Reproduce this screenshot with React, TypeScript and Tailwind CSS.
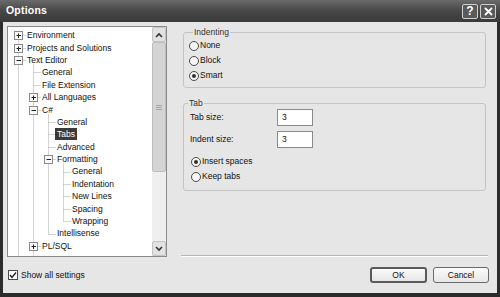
import React from 'react';

type Node = { label: string; level: number; exp?: '+' | '-'; selected?: boolean };

const nodes: Node[] = [
  { label: 'Environment', level: 0, exp: '+' },
  { label: 'Projects and Solutions', level: 0, exp: '+' },
  { label: 'Text Editor', level: 0, exp: '-' },
  { label: 'General', level: 1 },
  { label: 'File Extension', level: 1 },
  { label: 'All Languages', level: 1, exp: '+' },
  { label: 'C#', level: 1, exp: '-' },
  { label: 'General', level: 2 },
  { label: 'Tabs', level: 2, selected: true },
  { label: 'Advanced', level: 2 },
  { label: 'Formatting', level: 2, exp: '-' },
  { label: 'General', level: 3 },
  { label: 'Indentation', level: 3 },
  { label: 'New Lines', level: 3 },
  { label: 'Spacing', level: 3 },
  { label: 'Wrapping', level: 3 },
  { label: 'Intellisense', level: 2 },
  { label: 'PL/SQL', level: 1, exp: '+' },
];

const ROW = 12.4;
const TOP = 2;
const H = 229;
const padClass = ['pl-[17px]', 'pl-[32px]', 'pl-[47px]', 'pl-[62px]'];

const cyOf = (i: number) => Math.round(TOP + i * ROW + ROW / 2) + 0.5;
const xOf = (l: number) => 10 + 15 * l + 0.5;

function TreeLines() {
  const lines: React.ReactNode[] = [];
  const boxes: React.ReactNode[] = [];
  // root vertical
  lines.push(<line key="root" x1={xOf(0)} y1={cyOf(0)} x2={xOf(0)} y2={H} />);
  nodes.forEach((n, i) => {
    const cy = cyOf(i);
    const x = xOf(n.level);
    lines.push(<line key={'h' + i} x1={x} y1={cy} x2={x + 7} y2={cy} />);
    if (n.exp === '-') {
      let last = -1;
      let ended = false;
      for (let j = i + 1; j < nodes.length; j++) {
        if (nodes[j].level <= n.level) { ended = true; break; }
        if (nodes[j].level === n.level + 1) last = j;
      }
      const vx = xOf(n.level + 1);
      const y2 = ended ? cyOf(last) : H;
      lines.push(<line key={'v' + i} x1={vx} y1={cy + 4} x2={vx} y2={y2} />);
    }
    if (n.exp) {
      boxes.push(
        <g key={'b' + i}>
          <rect x={x - 4} y={cy - 4} width={8} height={8} fill="#fafafa" stroke="#8a8a8a" strokeWidth={1} />
          <line x1={x - 2} y1={cy} x2={x + 2.5} y2={cy} stroke="#222" strokeWidth={1} />
          {n.exp === '+' && <line x1={x} y1={cy - 2} x2={x} y2={cy + 2.5} stroke="#222" strokeWidth={1} />}
        </g>
      );
    }
  });
  return (
    <svg className="absolute left-0 top-0" width={144} height={H}>
      <g stroke="#a8a8a8" strokeWidth={1} strokeDasharray="1 1">{lines}</g>
      {boxes}
    </svg>
  );
}

function Radio({ checked, label, cls }: { checked?: boolean; label: string; cls: string }) {
  return (
    <div className={`flex h-[15px] items-center ${cls}`}>
      <div className="flex h-[10px] w-[10px] items-center justify-center rounded-full border border-[#4a4a4a] bg-[#f6f6f6]">
        {checked && <div className="h-[4px] w-[4px] rounded-full bg-[#333]" />}
      </div>
      <span className="ml-[1px]">{label}</span>
    </div>
  );
}

function Chevron({ up }: { up?: boolean }) {
  return (
    <svg width="8" height="6" viewBox="0 0 8 6">
      <polyline
        points={up ? '1,5 4,2 7,5' : '1,1 4,4 7,1'}
        fill="none"
        stroke="#333"
        strokeWidth="1.6"
      />
    </svg>
  );
}

export default function App() {
  return (
    <div className="flex h-[297px] w-[500px] flex-col bg-[#2c2c2c] font-['Liberation_Sans',Arial,sans-serif] text-[8.5px] text-[#111]">
      {/* Title bar */}
      <div className="flex h-[22px] items-center bg-gradient-to-b from-[#6a6a6a] via-[#474747] to-[#3a3a3a] pl-[6px] pr-[4px]">
        <span className="text-[10.5px] font-bold tracking-[0.2px] text-white">Options</span>
        <div className="ml-auto flex gap-[2px]">
          <div className="flex h-[15px] w-[16px] items-center justify-center rounded-[2px] border border-[#cfcfcf] bg-[#5a5a5a] text-[12px] font-bold leading-none text-white">?</div>
          <div className="flex h-[15px] w-[16px] items-center justify-center rounded-[2px] border border-[#cfcfcf] bg-[#5a5a5a]">
            <svg width="9" height="9" viewBox="0 0 9 9">
              <path d="M1 1 L8 8 M8 1 L1 8" stroke="white" strokeWidth="1.8" />
            </svg>
          </div>
        </div>
      </div>

      {/* Client area */}
      <div className="mx-[3px] mb-[4px] flex flex-1 flex-col bg-[#e6e6e6]">
        <div className="flex pl-[4px] pt-[4px]">
          {/* Tree */}
          <div className="flex h-[231px] w-[160px] border border-[#8a8a8a] bg-white">
            <div className="relative w-[144px] overflow-hidden">
              <TreeLines />
              <div className="relative pt-[2px]">
                {nodes.map((n, i) => (
                  <div key={i} className={`flex h-[12.4px] items-center whitespace-nowrap leading-[12px] ${padClass[n.level]}`}>
                    <span className={n.selected ? 'bg-[#3a3a3a] px-[2px] text-white' : 'px-[2px]'}>{n.label}</span>
                  </div>
                ))}
              </div>
            </div>
            {/* Scrollbar */}
            <div className="flex w-[14px] flex-col bg-[#efefef]">
              <div className="flex h-[15px] items-center justify-center rounded-[2px] border border-[#c4c4c4] bg-[#e2e2e2]">
                <Chevron up />
              </div>
              <div className="flex h-[130px] flex-col items-center justify-center gap-[1px] rounded-[2px] border border-[#bdbdbd] bg-[#d4d4d4]">
                <div className="h-px w-[6px] bg-[#a8a8a8]" />
                <div className="h-px w-[6px] bg-[#a8a8a8]" />
                <div className="h-px w-[6px] bg-[#a8a8a8]" />
              </div>
              <div className="flex-1" />
              <div className="flex h-[15px] items-center justify-center rounded-[2px] border border-[#c4c4c4] bg-[#e2e2e2]">
                <Chevron />
              </div>
            </div>
          </div>

          {/* Right panel */}
          <div className="ml-[14px] flex h-[231px] w-[307px] flex-col">
            <fieldset className="mx-[2px] h-[62px] rounded-[3px] border border-[#c4c4c4] pl-[5px]">
              <legend className="ml-[4px] px-[1px] leading-[12px] text-[#333]">Indenting</legend>
              <Radio label="None" cls="" />
              <Radio label="Block" cls="" />
              <Radio label="Smart" checked cls="" />
            </fieldset>

            <fieldset className="mx-[2px] mt-[9px] h-[94px] rounded-[3px] border border-[#c4c4c4]">
              <legend className="ml-[4px] px-[1px] leading-[12px] text-[#333]">Tab</legend>
              <div className="flex h-[17px] items-center pl-[6px]">
                <span className="w-[87px]">Tab size:</span>
                <div className="flex h-[17px] w-[36px] items-center border border-[#8a8a8a] bg-white pl-[4px]">3</div>
              </div>
              <div className="mt-[5px] flex h-[17px] items-center pl-[6px]">
                <span className="w-[87px]">Indent size:</span>
                <div className="flex h-[17px] w-[36px] items-center border border-[#8a8a8a] bg-white pl-[4px]">3</div>
              </div>
              <div className="mt-[6px]">
                <Radio label="Insert spaces" checked cls="pl-[7px]" />
                <Radio label="Keep tabs" cls="pl-[7px]" />
              </div>
            </fieldset>

            <div className="mt-auto h-[2px] border-b border-t border-b-white border-t-[#b4b4b4]" />
          </div>
        </div>

        {/* Bottom row */}
        <div className="mt-[10px] flex h-[16px] items-center pl-[5px] pr-[8px]">
          <div className="flex h-[10px] w-[10px] items-center justify-center border border-[#4a4a4a] bg-white">
            <svg width="8" height="8" viewBox="0 0 8 8">
              <polyline points="1,4 3,6.5 7,1.5" fill="none" stroke="#222" strokeWidth="1.4" />
            </svg>
          </div>
          <span className="ml-[3px]">Show all settings</span>
          <div className="ml-auto flex gap-[6px]">
            <div className="flex h-[16px] w-[57px] items-center justify-center rounded-[3px] border-2 border-[#5a5a5a] bg-gradient-to-b from-[#fbfbfb] to-[#e6e6e6]">OK</div>
            <div className="flex h-[16px] w-[56px] items-center justify-center rounded-[3px] border border-[#6a6a6a] bg-gradient-to-b from-[#fbfbfb] to-[#e6e6e6]">Cancel</div>
          </div>
        </div>
      </div>
    </div>
  );
}
